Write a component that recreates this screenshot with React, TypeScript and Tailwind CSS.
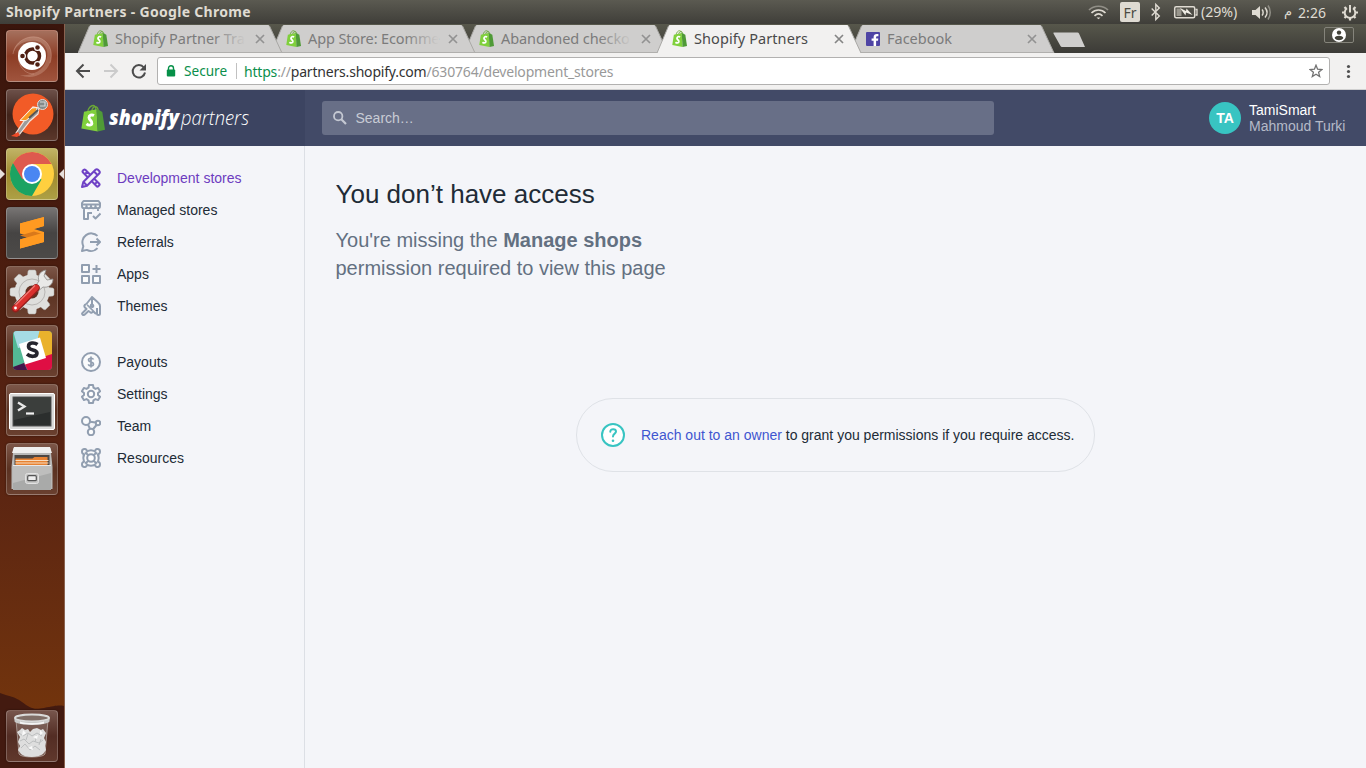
import React from "react";

const ubuntu = "font-['Noto_Sans',sans-serif]";

function Bag({ className }: { className?: string }) {
  return (
    <svg viewBox="0 0 24 27" className={className}>
      <path d="M6.500 8C7 3.500 10 .8 12.300 1c2 .2 2.700 2.500 2.700 5.200M10.500 7.500C10.800 4 13 1.500 14.800 2.100c1.500.4 2.200 2 2.400 4" fill="none" stroke="#6aa637" strokeWidth="1.300" />
      <path d="M3 7.300 15.600 4.800 16.800 27 .4 24z" fill="#80d03c" />
      <path d="m15.600 4.800 2.800 1 2.900 1.700L24 25.300 16.800 27z" fill="#4f9a37" />
      <path d="M13 11.100c-2.400-1.300-5-.4-5 2 0 2.700 3.400 3 2.900 5.800-.5 2.300-3.600 2-5.400.5" fill="none" stroke="#fff" strokeWidth="2.900" />
    </svg>
  );
}

function FacebookMark() {
  return (
    <svg viewBox="0 0 14 14" className="ml-px h-[14px] w-[14px]">
      <rect width="14" height="14" rx="1" fill="#4e44a4" />
      <path d="M7.600 14V8.800H5.600V6.600h2V5c0-2 1.300-3 3.200-3h1.600v2.200h-1.100c-.8 0-1.200.4-1.200 1.100v1.300h2.200l-.3 2.200h-1.900V14z" fill="#fff" />
    </svg>
  );
}

type TabData = { title: string; active?: boolean; fb?: boolean; fade?: boolean; tracking: string };

const tabs: TabData[] = [
  { title: "Shopify Partner Tra", fade: true, tracking: "tracking-[-0.05px]" },
  { title: "App Store: Ecomme", fade: true, tracking: "tracking-[-0.12px]" },
  { title: "Abandoned checko", fade: true, tracking: "tracking-[-0.1px]" },
  { title: "Shopify Partners", active: true, tracking: "tracking-[0.08px]" },
  { title: "Facebook", fb: true, tracking: "tracking-[0px]" },
];

function Tab({ tab, z }: { tab: TabData; z: string }) {
  const fill = tab.active ? "#f2f1f0" : "#cfcecd";
  return (
    <div className={`relative flex h-[29px] w-[193px] shrink-0 items-center pl-[15px] ${z}`}>
      <svg viewBox="0 0 206 29" className="absolute top-0 left-0 h-[29px] w-[206px]">
        <path d="M0 29 11.500 2Q12 1 13 1H190Q191 1 191.500 2L204 29z" fill={fill} />
        <path d="M0 29 11.500 2M191.500 2 204 29" fill="none" stroke="#a9a8a5" strokeWidth="1" />
        {!tab.active && <path d="M0 28.500H204" stroke="#b0afad" strokeWidth="1" />}
      </svg>
      <div className="relative flex w-[22px] shrink-0 items-center">
        {tab.fb ? <FacebookMark /> : <Bag className="h-[17px] w-[15px]" />}
      </div>
      <div
        className={`relative -top-px w-[131px] shrink-0 text-[14.5px] leading-[20px] whitespace-nowrap ${tab.tracking} ${tab.active ? "text-[#4a4a4a]" : "text-[#7b7b7b]"}`}
      >
        {tab.title}
        {tab.fade && <span className="absolute inset-y-0 right-0 w-[34px] bg-linear-to-r from-[#cfcecd00] to-[#cfcecd]" />}
      </div>
      <svg viewBox="0 0 10 10" className="relative ml-[9px] h-[10px] w-[10px] shrink-0">
        <path d="m1 1 8 8M9 1 1 9" stroke={tab.active ? "#858585" : "#929292"} strokeWidth="1.700" />
      </svg>
    </div>
  );
}

function Tile({ bg, children }: { bg: string; children: React.ReactNode }) {
  return (
    <div className={`relative flex h-[52px] w-[52px] shrink-0 items-center justify-center rounded-[4px] border border-[#ffffff38] shadow-[0_0_2px_#00000080] ${bg}`}>
      <svg viewBox="0 0 52 52" className="h-[52px] w-[52px] shrink-0">
        {children}
      </svg>
    </div>
  );
}

const brown = "bg-linear-to-b from-[#7c5648] via-[#5b3222] to-[#6a402f]";
const gearTeeth = [0, 45, 90, 135, 180, 225, 270, 315];

function Launcher() {
  return (
    <aside className="relative flex w-[65px] shrink-0 flex-col items-center gap-[7px] border-r border-[#8a6250] bg-linear-to-b from-[#3a150c] via-[#5a2412] via-60% to-[#78380a] pt-[6px] pr-0">
      <svg viewBox="0 0 64 80" className="absolute bottom-0 left-0 h-[80px] w-[64px]">
        <path d="M0 5c10 4 14 3 22 9s11 8 22 6 14-3 20-2v62H0z" fill="#431a10" />
      </svg>
      <Tile bg="bg-linear-to-b from-[#a5705d] via-[#8c3d25] to-[#a0543d]">
        <path d="M7 24C9 10 25 3 36 9c9 5 11 15 8 24-5 12-18 17-30 12 12 1 23-4 26-14 5-12-4-22-15-20C15 11 8 18 7 24" fill="#e8c4b5" fillOpacity=".28" />
        <path d="M7 24C9 10 25 3 36 9c9 5 11 15 8 24M13 20C10 33 17 44 28 44" fill="none" stroke="#e3b5a2" strokeOpacity=".35" strokeWidth="1" />
        <circle cx="26" cy="26" r="14" fill="#fff" />
        <circle cx="26.500" cy="26" r="7" fill="none" stroke="#4f1f12" strokeWidth="3.500" />
        <g fill="#4f1f12" stroke="#fff" strokeWidth="1.200">
          <circle cx="16.500" cy="26" r="2.900" />
          <circle cx="31.500" cy="17.500" r="2.900" />
          <circle cx="31.500" cy="34.500" r="2.900" />
        </g>
      </Tile>
      <Tile bg="bg-linear-to-b from-[#6c5049] via-[#41231a] to-[#5b372b]">
        <circle cx="27" cy="25" r="20.500" fill="#f25b27" />
        <path d="m33 19-6-1-12 13 3 1-8 12 3 2 11-14 8-7z" fill="#9b9b9b" stroke="#f3e5dc" strokeWidth="1.200" />
        <path d="m31 18.500-5 .5-12 12.500 6 0 10-8z" fill="#f99a22" stroke="#fff" strokeWidth=".8" />
        <path d="M32 21 23 29" stroke="#555" strokeWidth="2" />
        <circle cx="36.500" cy="15.500" r="5" fill="#858a8a" stroke="#ddd" />
        <path d="M34 13h5v4h-5" fill="none" stroke="#d6d6d6" strokeWidth="1.200" />
        <path d="m5 47 7-4 2 3-3 2z" fill="#ef4b28" />
      </Tile>
      <div className="relative">
        <Tile bg="bg-linear-to-b from-[#c1b365] via-[#a08a2d] to-[#ada045]">
          <circle cx="26" cy="26" r="22" fill="#ffcf3f" />
          <path d="M6.950 15A22 22 0 0 0 26 48l9.500-16.500L26 26z" fill="#1ba362" />
          <path d="M6.950 15A22 22 0 0 1 45.600 16H26l-9.500 15.500z" fill="#de5a4e" />
          <circle cx="26" cy="26" r="10" fill="#fff" />
          <circle cx="26" cy="26" r="8" fill="#4a86f2" />
        </Tile>
        <svg viewBox="0 0 65 10" className="absolute top-[21px] -left-[6px] h-[10px] w-[65px]">
          <path d="m0 0 5 5-5 5zM64 0l-5 5 5 5z" fill="#e6dfdc" />
        </svg>
      </div>
      <Tile bg="bg-linear-to-b from-[#777473] via-[#464443] to-[#4c4a48]">
        <path d="m14 16.500 24-6.500v9l-10 3 10 3v10l-24 6.500v-9l10-3-10-3z" fill="#ff9a21" />
        <path d="m14 28.500 14-4 10 3-14 4z" fill="#d9791b" />
        <path d="m14 16.500 24-6.500v9l-24 7zM14 32.500l24-7v9.500l-24 6.500z" fill="#ff9a21" />
      </Tile>
      <Tile bg={brown}>
        <g fill="#dfdfdd" stroke="#a7a5a2" strokeWidth=".5">
          {gearTeeth.map((a) => (
            <path key={a} d="m22 5 1-1h6l1 1 1 8H21z" transform={`rotate(${a} 26 26)`} />
          ))}
        </g>
        <circle cx="26" cy="26" r="17.500" fill="#dededc" />
        <circle cx="26" cy="26" r="13" fill="none" stroke="#b8b6b4" />
        <circle cx="26" cy="26" r="6.500" fill="#5f3022" />
        <path d="M33 15c-2-5 1-10 7-11l-2 6 3 4 6-1c0 6-5 9-10 8l-6 5-3-4z" fill="#e9e9e8" stroke="#8e8c8a" strokeWidth=".8" />
        <path d="M30 22 9.500 42.500" stroke="#941e1b" strokeWidth="7.500" strokeLinecap="round" />
        <path d="M30 21.500 9.500 42" stroke="#da302d" strokeWidth="5.700" strokeLinecap="round" />
        <path d="m29 19.500-19.500 19.500" stroke="#f17b75" strokeWidth="1.300" />
        <circle cx="9.500" cy="42" r="1.400" fill="#fff" />
      </Tile>
      <Tile bg={brown}>
        <clipPath id="slack"><rect x="7" y="6" width="39" height="39" rx="4" /></clipPath>
        <g clipPath="url(#slack)">
          <path d="M7 6h39v39H7z" fill="#53b895" />
          <path d="M7 6h32l-5 13-22 4z" fill="#a5dbe4" />
          <path d="M34 4h14v32L36 30 32 12z" fill="#eab22c" />
          <path d="M46 29v17H22l-4-8z" fill="#df0e44" />
          <path d="m7 42 11-4 4 9H7z" fill="#44154b" />
          <path d="m13 19 21-6.500 6 20.500-21 6.500z" fill="#fff" />
        </g>
        <path d="M31.500 19.500c-3-2.200-9-2.200-9 1.900 0 4.500 8.500 2.500 8.500 6.600 0 4.200-6.500 4.200-10 1.200" fill="none" stroke="#25252e" strokeWidth="3.600" />
      </Tile>
      <Tile bg={brown}>
        <rect x="3.500" y="9.500" width="45" height="36" rx="1.500" fill="#d9d9d8" stroke="#fff" />
        <rect x="7" y="13" width="38" height="29" fill="#2b2e2d" stroke="#555" />
        <path d="M8 14h36v14L8 36z" fill="#3b3e3c" />
        <path d="m12 18.500 6.500 4-6.500 4" fill="none" stroke="#e8e8e8" strokeWidth="2.300" />
        <path d="M20 29.500h8" stroke="#f2f2f2" strokeWidth="2.200" />
      </Tile>
      <Tile bg={brown}>
        <path d="M7.500 5h37l2 19v22h-41V24z" fill="#b9b9b8" />
        <path d="M8 4h36l2 6H6z" fill="#efefee" />
        <path d="M8.500 12h35v11h-35z" fill="#4c4743" />
        <path d="M9.500 15.500h17l2-1.500h13v9h-32z" fill="#e78232" />
        <path d="M9.500 17.500h33M9.500 20h33" stroke="#f7dcc0" strokeWidth="1" />
        <path d="M7 22h38v25H7z" fill="#a9aaa9" />
        <path d="M7 22h38v8L7 40z" fill="#bebebd" />
        <path d="M7 22.500h38" stroke="#e8e8e8" />
        <rect x="19.500" y="30.500" width="13" height="10" rx="2" fill="#c6c6c5" stroke="#e3e3e3" />
        <rect x="21.700" y="32.700" width="8.600" height="5" rx="1" fill="#eee" stroke="#555" strokeWidth="1.200" />
      </Tile>
      <div className="relative mt-auto mb-[6px]">
        <Tile bg="bg-linear-to-b from-[#77554c] via-[#532d24] to-[#60382c]">
          <path d="m10 10 3 34c1 4 25 4 26 0l3-34z" fill="#b0a4a0" fillOpacity=".3" stroke="#beb3ae" strokeWidth=".7" />
          <path d="m11 22 3-2 2-2 3 2 3-1 2 3 3-3 4-1 4 2 2-1 3 4-2 5 2 4-1 4 1 4-3 4c-5 4-18 4-22 0l-3-4 2-4-2-4 2-5z" fill="#dedede" />
          <path d="m13 23 4 3 5-3 4 3 5-3 5 3M14 31l4-2 5 5 4-3 6 2 4-3M15 38l4-4 5 6 5-4 5 4M22 24l-2 6M31 25l-2 7M35 29l-2 6" fill="none" stroke="#bcbebf" strokeWidth="1" />
          <path d="m17 20 3 3-4 3zM27 27l5-2-1 4zM22 38l4-2 1 4zM34 20l3 3-3 2z" fill="#fafafa" />
          <ellipse cx="26" cy="8" rx="17" ry="3.500" fill="#806e67" stroke="#dadad9" strokeWidth="2" />
          <path d="M8.500 8.500c2 4.500 33 4.500 35 0v3c-3 4.500-32 4.500-35 0z" fill="#c9c9c8" />
          <path d="M14 11.500c7 2 17 2 24 0v2c-6 1.500-18 1.500-24 0z" fill="#f4f4f4" />
        </Tile>
      </div>
    </aside>
  );
}

function SystemBar() {
  return (
    <header className="relative flex h-[24px] shrink-0 items-center bg-linear-to-b from-[#5b5a51] to-[#3f3e39] pl-[6px] text-[#dfdbd2]">
      <div className="text-[14px] leading-[24px] font-bold tracking-[0.31px] whitespace-nowrap">Shopify Partners - Google Chrome</div>
      <div className="relative ml-auto flex h-[24px] w-[278px] items-center text-[14px]">
        <svg viewBox="0 0 278 24" className="absolute top-0 right-0 h-[24px] w-[278px]" fill="none" stroke="#dfdbd2">
          <g strokeWidth="1.700">
            <path d="M1 10c5-5 14-5 19 0" stroke="#918f87" />
            <path d="M3.500 13c4-4 10-4 14 0" />
            <path d="M6.500 15.800c2.500-2.300 5.500-2.300 8 0" />
            <path d="m8.500 17.500 2 1.800 2-1.800z" fill="#dfdbd2" stroke="none" />
          </g>
          <rect x="32" y="2" width="20" height="20" rx="2" fill="#dfdbd2" stroke="none" />
          <path d="m63.700 8.500 7.600 7.500-3.500 3.500V4.500l3.500 3.500-7.600 7.500" strokeWidth="1.400" />
          <rect x="86.700" y="6.700" width="20" height="11" rx="1.500" strokeWidth="1.500" />
          <path d="M107.500 9.500h1.500v5.500h-1.500" strokeWidth="1.300" />
          <path d="M88.500 8.500h5v7.500h-5z" fill="#99968d" stroke="none" />
          <path d="m92 8 6 3 .5-2.500 6 6.500-6.500-2.500-.5 3z" fill="#f0ede5" stroke="none" />
          <path d="M164 10h3.500l4.500-4v13l-4.500-4H164z" fill="#dfdbd2" stroke="none" />
          <path d="M174 9.500c1.500 1.500 1.500 4.500 0 6M177 7.500c2.500 3 2.500 7 0 10" strokeWidth="1.500" />
          <path d="M180 5.500c3 4 3 10 0 14" stroke="#918f87" strokeWidth="1.500" />
          <path d="M259 8.300a5.300 5.300 0 1 0 6 0" strokeWidth="2" />
          <path d="M262 5v7.500" strokeWidth="2" />
          <path d="M262 18v2.500M254 12.500h2.500M267.500 12.500h2.500M256.500 7l1.700 1.700M267.500 7l-1.700 1.700M256.500 18l1.700-1.700M267.500 18l-1.700-1.700" strokeWidth="2.200" />
        </svg>
        <span className="relative ml-[32px] w-[20px] text-center text-[14px] text-[#4b4a43]">Fr</span>
        <span className="relative ml-[61px] w-[51px] text-[14.2px] tracking-[-0.05px] whitespace-nowrap">(29%)</span>
        <span className="relative ml-[31px] w-[10px] text-center font-['DejaVu_Sans',sans-serif] text-[13px]">م</span>
        <span className="relative ml-[5px] text-[14px] tracking-[0.1px]">2:26</span>
      </div>
    </header>
  );
}

function Browser() {
  return (
    <>
      <div className="flex h-[29px] shrink-0 bg-linear-to-b from-[#57574b] to-[#3c3b37] pl-[13px]">
        {tabs.map((t, i) => (
          <Tab key={t.title} tab={t} z={t.active ? "z-20" : i === 0 ? "z-[9]" : i === 1 ? "z-[8]" : i === 2 ? "z-[7]" : "z-[6]"} />
        ))}
        <svg viewBox="0 0 34 16" className="mt-[8px] ml-[9px] h-[16px] w-[34px]">
          <path d="M2 .500h23.500q1 0 1.500 1L33 15H10q-1 0-1.500-1L1.500 1.500q-.5-1 .5-1z" fill="#cfcecd" />
        </svg>
        <div className="mt-[3px] mr-[12px] ml-auto flex h-[16px] w-[30px] items-center justify-center rounded-[2px] border border-[#85847b]">
          <svg viewBox="0 0 14 14" className="h-[14px] w-[14px]">
            <circle cx="7" cy="7" r="7" fill="#fff" />
            <circle cx="7" cy="4.600" r="2.200" fill="#424239" />
            <path d="M2.600 10c1-3 7.800-3 8.800 0-2 3-6.800 3-8.800 0" fill="#424239" />
          </svg>
        </div>
      </div>
      <div className="flex h-[37px] shrink-0 items-center border-b border-[#d0d0d0] bg-[#f2f1f0]">
        <svg viewBox="0 0 92 36" className="h-[36px] w-[92px] shrink-0" fill="none" strokeWidth="2">
          <path d="M25 18H12M18.500 11.500 12 18l6.500 6.500" stroke="#4c4c4c" />
          <path d="M39 18h13M45.500 11.500 52 18l-6.500 6.500" stroke="#cbcbcb" />
          <path d="M78.800 14.500A6.200 6.200 0 1 0 80 19.500" stroke="#4c4c4c" />
          <path d="M81 11v6.500h-6.500z" fill="#4c4c4c" />
        </svg>
        <div className="flex h-[28px] flex-1 items-center rounded-[3px] border border-[#b2b1b0] bg-white">
          <svg viewBox="0 0 10 12" className="ml-[8px] h-[12px] w-[10px]">
            <path d="M2.500 5V3.200a2.300 2.300 0 0 1 5 0V5" fill="none" stroke="#069048" strokeWidth="1.400" />
            <rect x=".8" y="4.500" width="8.400" height="7" rx="1" fill="#069048" />
          </svg>
          <span className="ml-[8px] w-[52px] text-[13.6px] whitespace-nowrap text-[#0b8f4c]">Secure</span>
          <span className="h-[16px] w-px bg-[#c1c1c1]" />
          <span className="ml-[7px] text-[14px] tracking-[-0.19px] whitespace-nowrap text-[#999]">
            <span className="text-[#0b8f4c]">https</span>://<span className="text-[#333]">partners.shopify.com</span>/630764/development_stores
          </span>
          <svg viewBox="0 0 14 14" className="mr-[6px] ml-auto h-[14px] w-[14px]">
            <path d="m7 1.200 1.600 4 4.300.3-3.300 2.800 1.100 4.200L7 10.200l-3.700 2.300 1.100-4.200L1.100 5.500l4.300-.3z" fill="none" stroke="#727272" strokeWidth="1.300" />
          </svg>
        </div>
        <svg viewBox="0 0 36 36" className="h-[36px] w-[36px] shrink-0" fill="#505050">
          <circle cx="18.500" cy="13.500" r="1.600" />
          <circle cx="18.500" cy="18.500" r="1.600" />
          <circle cx="18.500" cy="23.500" r="1.600" />
        </svg>
      </div>
    </>
  );
}

const icons: Record<string, React.ReactNode> = {
  "Development stores": (
    <>
      <path d="m1 19 1.300-5L14.500 1.800a1.800 1.800 0 0 1 2.500 0l1.200 1.200a1.800 1.800 0 0 1 0 2.500L6 17.700z" />
      <path d="m13 3.500 3.500 3.500M2.500 14l3.500 3.500" />
      <path d="M7 9.500 1.800 4.300a1 1 0 0 1 0-1.500l1-1a1 1 0 0 1 1.500 0L9.500 7M13 10.500l5.300 5.200a1 1 0 0 1 0 1.500l-1.100 1.100a1 1 0 0 1-1.500 0L10.500 13M4.500 5.500l1.500-1.500M14 16l2-2" />
    </>
  ),
  "Managed stores": (
    <>
      <path d="M1 6V3l1.500-2h15L19 3v3M1 4.500h18M1 6c0 3 4.500 3 4.500 0 0 3 4.500 3 4.500 0 0 3 4.500 3 4.500 0 0 3 4.500 3 4.500 0M3 8v11h4v-6h4M17 8v3" />
      <path d="m12 16 2.500 2.500 5-5" fill="none" />
    </>
  ),
  Referrals: (
    <>
      <path d="M16.500 3.900A8.900 8.900 0 0 0 2.300 14.200L1 19l4.800-1.100a8.900 8.900 0 0 0 10.700-1.800" />
      <path d="M9 10h10M15.500 6.500 19 10l-3.500 3.500" />
    </>
  ),
  Apps: <path d="M1 1h7v7H1zM1 12h7v7H1zM12 12h7v7h-7zM15.500 1v8M11.500 5h8" />,
  Themes: (
    <>
      <path d="M5 8.500 11 1l6 5.500q2 1.700 2 3.500v7.500q0 1.500-1.500 1.500T16 17.500V12M11 1v10M6 9l9 9" />
      <path d="M5 8.500c-2 0-2 2-1 3l1.500 1.500L1.500 17c-1 1 .5 2.800 2 1.700l4-3.700 1.500 1c1 1.500 3 .5 2.500-1M11 8.500a1.300 1.300 0 1 1 0 2.600 1.300 1.300 0 0 1 0-2.600" />
    </>
  ),
  Payouts: (
    <>
      <circle cx="10" cy="10" r="9" />
      <path d="M12.500 7.500c-.7-1.700-5-1.700-5 .4 0 2.500 5 1.500 5 4.200 0 2.300-4.300 2.300-5.300.3M10 4.500v11" strokeWidth="1.700" />
    </>
  ),
  Settings: (
    <>
      <path d="M8 1h4l.5 2.700 2 1.200 2.600-1 2 3.400-2.100 1.800v1.800l2.100 1.800-2 3.400-2.600-1-2 1.200L12 19H8l-.5-2.700-2-1.200-2.600 1-2-3.400L3 10.900V9.100L.9 7.300l2-3.400 2.600 1 2-1.200z" />
      <circle cx="10" cy="10" r="3.200" />
    </>
  ),
  Team: (
    <>
      <circle cx="5" cy="5" r="4" />
      <circle cx="17" cy="7" r="2.200" />
      <circle cx="10" cy="16" r="3.200" />
      <path d="m9 5.700 5.800.9M7 8.500l2 4.400M15.500 9l-3.700 4.500" />
    </>
  ),
  Resources: (
    <>
      <circle cx="10" cy="10" r="7.700" />
      <circle cx="10" cy="10" r="3.800" />
      <path d="M6 2.800C5 0 1 .5 1 3.500 1 5 2 6 3 6.200M14 2.800c1-2.800 5-2.300 5 .7 0 1.500-1 2.500-2 2.700M6 17.200C5 20 1 19.500 1 16.500c0-1.500 1-2.500 2-2.700M14 17.200c1 2.800 5 2.300 5-.7 0-1.500-1-2.500-2-2.700M4.500 4.500l3 3M15.500 4.500l-3 3M4.500 15.500l3-3M15.500 15.500l-3-3" />
    </>
  ),
};

function NavItem({ label, active }: { label: string; active?: boolean }) {
  return (
    <li className={`flex h-[32px] items-center gap-4 text-[14px] ${active ? "text-[#6d3cc0]" : "text-[#212b36]"}`}>
      <svg viewBox="0 0 20 20" className="h-5 w-5" fill={label === "Development stores" || label === "Referrals" ? "none" : "#ffffff90"} stroke={active ? "#6f42c6" : "#919eb0"} strokeWidth="2" strokeLinejoin="round">
        {icons[label]}
      </svg>
      {label}
    </li>
  );
}

export default function App() {
  return (
    <div className={`flex h-[768px] w-[1366px] flex-col overflow-hidden ${ubuntu}`}>
      <SystemBar />
      <div className="flex min-h-0 flex-1">
        <Launcher />
        <div className="flex min-w-0 flex-1 flex-col">
          <Browser />
          <div className="flex min-h-0 flex-1 flex-col bg-[#f4f5f9] font-['Liberation_Sans',Arial,sans-serif]">
            <div className="flex h-[56px] shrink-0 bg-[#424a67]">
              <div className="flex w-[240px] items-center bg-[#3c4461] pl-4">
                <Bag className="h-[28px] w-[24px]" />
                <svg viewBox="0 0 145 32" className="h-[32px] w-[145px]" fill="#fff" fontStyle="italic">
                  <text x="4" y="22.500" fontSize="20.500" fontWeight="800" textLength="70" lengthAdjust="spacingAndGlyphs" fontFamily="Open Sans">shopify</text>
                  <text x="76" y="22.500" fontSize="20.500" fontWeight="300" textLength="68" lengthAdjust="spacingAndGlyphs" fontFamily="Open Sans">partners</text>
                </svg>
              </div>
              <div className="flex flex-1 items-center pr-[20px] pl-[17px]">
                <div className="flex h-[34px] w-[672px] items-center rounded-[3px] bg-[#686f87] pl-[11px] text-[14px] text-[#c8ccd5]">
                  <svg viewBox="0 0 14 14" className="mr-[8.500px] h-[14px] w-[14px]" fill="none" stroke="#c4c8d2" strokeWidth="1.800">
                    <circle cx="5.200" cy="5.200" r="4.200" />
                    <path d="m8.300 8.300 4.700 4.700" strokeWidth="2.200" />
                  </svg>
                  Search…
                </div>
                <div className="ml-auto flex h-8 w-8 items-center justify-center rounded-full bg-[#38c4c2] text-[14px] font-bold text-white">TA</div>
                <div className="ml-2 w-[97px] text-[14px] leading-[16px] whitespace-nowrap text-white">
                  <div>TamiSmart</div>
                  <div className="text-[#b5bac8]">Mahmoud Turki</div>
                </div>
              </div>
            </div>
            <div className="flex min-h-0 flex-1">
              <nav className="flex w-[240px] shrink-0 flex-col gap-[24px] border-r border-[#dcdfe5] pt-4 pl-4">
                <ul>
                  <NavItem label="Development stores" active />
                  <NavItem label="Managed stores" />
                  <NavItem label="Referrals" />
                  <NavItem label="Apps" />
                  <NavItem label="Themes" />
                </ul>
                <ul>
                  <NavItem label="Payouts" />
                  <NavItem label="Settings" />
                  <NavItem label="Team" />
                  <NavItem label="Resources" />
                </ul>
              </nav>
              <main className="flex flex-1 flex-col pt-[32px] pl-[30.500px]">
                <h1 className="text-[26px] leading-[32px] text-[#212b36]">You don’t have access</h1>
                <p className="mt-4 text-[20px] leading-[28px] text-[#637081]">
                  You're missing the <b>Manage shops</b>
                  <br />
                  permission required to view this page
                </p>
                <div className="mt-[116px] ml-[240.500px] flex h-[74px] w-[519px] items-center rounded-full border border-[#dfe2e7] pl-[24px] text-[14px] whitespace-nowrap text-[#212b36]">
                  <svg viewBox="0 0 24 24" className="mr-4 h-6 w-6 shrink-0" fill="none" stroke="#38c4c2" strokeWidth="2">
                    <circle cx="12" cy="12" r="11" fill="#fff" />
                    <path d="M9.300 8.700c0-3.500 5.700-3.200 5.700-.2 0 2.300-3 2-3 5" strokeLinecap="round" />
                    <circle cx="12" cy="17.800" r="1.300" fill="#38c4c2" stroke="none" />
                  </svg>
                  <span><span className="text-[#3f56d0]">Reach out to an owner</span> to grant you permissions if you require access.</span>
                </div>
              </main>
            </div>
          </div>
        </div>
      </div>
    </div>
  );
}
